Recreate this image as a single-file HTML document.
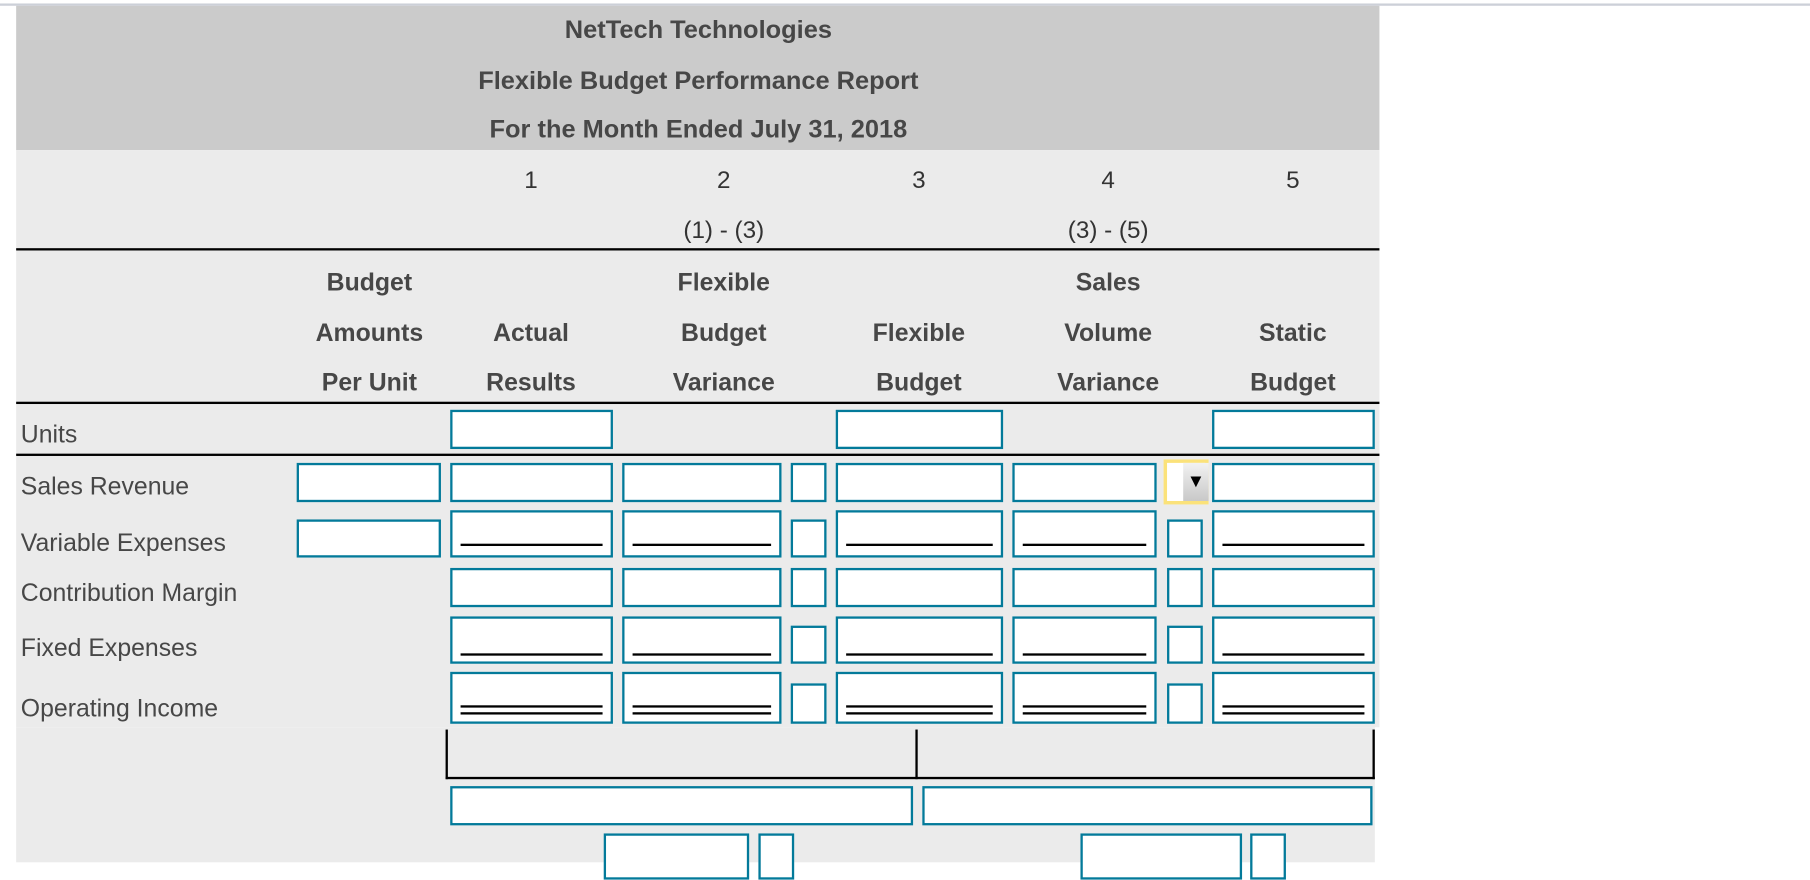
<!DOCTYPE html>
<html><head><meta charset="utf-8">
<style>
html,body{margin:0;padding:0;background:#fff;width:1810px;height:862px;overflow:hidden}
#w{position:absolute;left:0;top:0;width:1568px;height:747px;transform:scale(1.15434);transform-origin:0 0;font-family:"Liberation Sans",Arial,sans-serif;color:#3c3c3c}
.a{position:absolute}
.t{position:absolute;transform:translate(-50%,-50%);white-space:nowrap}
.b{font-weight:bold;font-size:21.5px;color:#474747}
.n{font-size:21px;color:#333}
.l{position:absolute;font-size:21.5px;color:#474747;transform:translateY(-50%);white-space:nowrap;left:18px}
.bx{position:absolute;box-sizing:border-box;border:2px solid #037a9a;background:#fff}
.u{position:absolute;left:7px;right:7px;height:2px;background:#000}
.k{position:absolute;background:#000}
</style></head><body><div id="w">
<div class="a" style="left:0;top:3px;width:1568px;height:2px;background:#ccd0d8"></div>
<div class="a" style="left:14px;top:5px;width:1181px;height:125px;background:#cbcbcb"></div>
<div class="a" style="left:14px;top:130px;width:1181px;height:500px;background:#ebebeb"></div>
<div class="a" style="left:14px;top:630px;width:1177px;height:117px;background:#ebebeb"></div>

<div class="t b" style="left:605px;top:26px;font-size:22px">NetTech Technologies</div>
<div class="t b" style="left:605px;top:70px;font-size:22px">Flexible Budget Performance Report</div>
<div class="t b" style="left:605px;top:112px;font-size:22px">For the Month Ended July 31, 2018</div>

<div class="t n" style="left:460px;top:157px">1</div>
<div class="t n" style="left:627px;top:157px">2</div>
<div class="t n" style="left:796px;top:157px">3</div>
<div class="t n" style="left:960px;top:157px">4</div>
<div class="t n" style="left:1120px;top:157px">5</div>
<div class="t n" style="left:627px;top:200px;font-size:21px">(1) - (3)</div>
<div class="t n" style="left:960px;top:200px;font-size:21px">(3) - (5)</div>
<div class="k" style="left:14px;top:215px;width:1181px;height:2px"></div>

<div class="t b" style="left:320px;top:245px">Budget</div>
<div class="t b" style="left:320px;top:289px">Amounts</div>
<div class="t b" style="left:320px;top:332px">Per Unit</div>
<div class="t b" style="left:460px;top:289px">Actual</div>
<div class="t b" style="left:460px;top:332px">Results</div>
<div class="t b" style="left:627px;top:245px">Flexible</div>
<div class="t b" style="left:627px;top:289px">Budget</div>
<div class="t b" style="left:627px;top:332px">Variance</div>
<div class="t b" style="left:796px;top:289px">Flexible</div>
<div class="t b" style="left:796px;top:332px">Budget</div>
<div class="t b" style="left:960px;top:245px">Sales</div>
<div class="t b" style="left:960px;top:289px">Volume</div>
<div class="t b" style="left:960px;top:332px">Variance</div>
<div class="t b" style="left:1120px;top:289px">Static</div>
<div class="t b" style="left:1120px;top:332px">Budget</div>
<div class="k" style="left:14px;top:348px;width:1181px;height:2px"></div>

<div class="l" style="top:377px">Units</div>
<div class="bx" style="left:390px;top:355px;width:141px;height:34px"></div>
<div class="bx" style="left:724px;top:355px;width:145px;height:34px"></div>
<div class="bx" style="left:1050px;top:355px;width:141px;height:34px"></div>
<div class="k" style="left:14px;top:393px;width:1181px;height:2px"></div>

<div class="l" style="top:422px">Sales Revenue</div>
<div class="bx" style="left:257px;top:401px;width:125px;height:34px"></div>
<div class="bx" style="left:390px;top:401px;width:141px;height:34px"></div>
<div class="bx" style="left:539px;top:401px;width:138px;height:34px"></div>
<div class="bx" style="left:685px;top:401px;width:31px;height:34px"></div>
<div class="bx" style="left:724px;top:401px;width:145px;height:34px"></div>
<div class="bx" style="left:877px;top:401px;width:125px;height:34px"></div>
<div class="a" style="left:1008px;top:398px;width:39px;height:39px;box-sizing:border-box;border:3px solid #fbe27a;background:#fff"><div class="a" style="left:14px;top:0;width:22px;height:33px;background:linear-gradient(#f2f2f2,#c8c8c8);font-size:16px;color:#000;text-align:center;line-height:33px">▼</div></div>
<div class="bx" style="left:1050px;top:401px;width:141px;height:34px"></div>

<div class="l" style="top:471px">Variable Expenses</div>
<div class="bx" style="left:257px;top:450px;width:125px;height:33px"></div>
<div class="bx" style="left:390px;top:442px;width:141px;height:41px"><div class="u" style="top:27px"></div></div>
<div class="bx" style="left:539px;top:442px;width:138px;height:41px"><div class="u" style="top:27px"></div></div>
<div class="bx" style="left:685px;top:450px;width:31px;height:33px"></div>
<div class="bx" style="left:724px;top:442px;width:145px;height:41px"><div class="u" style="top:27px"></div></div>
<div class="bx" style="left:877px;top:442px;width:125px;height:41px"><div class="u" style="top:27px"></div></div>
<div class="bx" style="left:1011px;top:450px;width:31px;height:33px"></div>
<div class="bx" style="left:1050px;top:442px;width:141px;height:41px"><div class="u" style="top:27px"></div></div>

<div class="l" style="top:514px">Contribution Margin</div>
<div class="bx" style="left:390px;top:492px;width:141px;height:34px"></div>
<div class="bx" style="left:539px;top:492px;width:138px;height:34px"></div>
<div class="bx" style="left:685px;top:492px;width:31px;height:34px"></div>
<div class="bx" style="left:724px;top:492px;width:145px;height:34px"></div>
<div class="bx" style="left:877px;top:492px;width:125px;height:34px"></div>
<div class="bx" style="left:1011px;top:492px;width:31px;height:34px"></div>
<div class="bx" style="left:1050px;top:492px;width:141px;height:34px"></div>

<div class="l" style="top:562px">Fixed Expenses</div>
<div class="bx" style="left:390px;top:534px;width:141px;height:41px"><div class="u" style="top:30px"></div></div>
<div class="bx" style="left:539px;top:534px;width:138px;height:41px"><div class="u" style="top:30px"></div></div>
<div class="bx" style="left:685px;top:542px;width:31px;height:33px"></div>
<div class="bx" style="left:724px;top:534px;width:145px;height:41px"><div class="u" style="top:30px"></div></div>
<div class="bx" style="left:877px;top:534px;width:125px;height:41px"><div class="u" style="top:30px"></div></div>
<div class="bx" style="left:1011px;top:542px;width:31px;height:33px"></div>
<div class="bx" style="left:1050px;top:534px;width:141px;height:41px"><div class="u" style="top:30px"></div></div>

<div class="l" style="top:614px">Operating Income</div>
<div class="bx" style="left:390px;top:582px;width:141px;height:45px"><div class="u" style="top:27px"></div><div class="u" style="top:33px"></div></div>
<div class="bx" style="left:539px;top:582px;width:138px;height:45px"><div class="u" style="top:27px"></div><div class="u" style="top:33px"></div></div>
<div class="bx" style="left:685px;top:592px;width:31px;height:35px"></div>
<div class="bx" style="left:724px;top:582px;width:145px;height:45px"><div class="u" style="top:27px"></div><div class="u" style="top:33px"></div></div>
<div class="bx" style="left:877px;top:582px;width:125px;height:45px"><div class="u" style="top:27px"></div><div class="u" style="top:33px"></div></div>
<div class="bx" style="left:1011px;top:592px;width:31px;height:35px"></div>
<div class="bx" style="left:1050px;top:582px;width:141px;height:45px"><div class="u" style="top:27px"></div><div class="u" style="top:33px"></div></div>

<div class="k" style="left:386px;top:632px;width:2px;height:43px"></div>
<div class="k" style="left:793px;top:632px;width:2px;height:43px"></div>
<div class="k" style="left:1189px;top:632px;width:2px;height:43px"></div>
<div class="k" style="left:386px;top:673px;width:805px;height:2px"></div>

<div class="bx" style="left:390px;top:681px;width:401px;height:34px"></div>
<div class="bx" style="left:799px;top:681px;width:390px;height:34px"></div>

<div class="bx" style="left:523px;top:722px;width:126px;height:40px"></div>
<div class="bx" style="left:657px;top:722px;width:31px;height:40px"></div>
<div class="bx" style="left:936px;top:722px;width:140px;height:40px"></div>
<div class="bx" style="left:1083px;top:722px;width:31px;height:40px"></div>
</div></body></html>
